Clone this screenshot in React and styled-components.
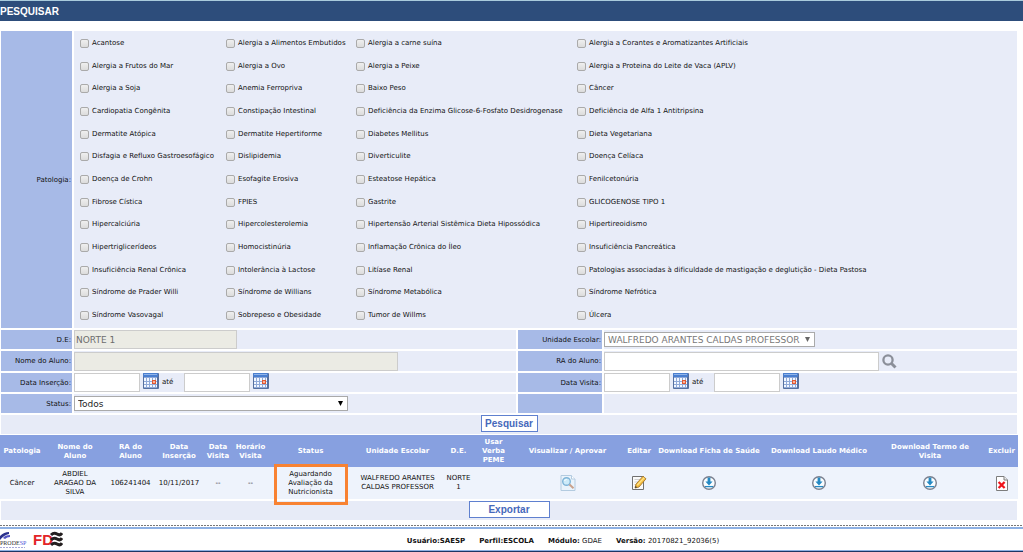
import React, { useState } from 'react';
import styled, { createGlobalStyle } from 'styled-components';

const patologias = [
    'Acantose', 'Alergia a Alimentos Embutidos', 'Alergia a carne suína', 'Alergia a Corantes e Aromatizantes Artificiais',
    'Alergia a Frutos do Mar', 'Alergia a Ovo', 'Alergia a Peixe', 'Alergia a Proteina do Leite de Vaca (APLV)',
    'Alergia a Soja', 'Anemia Ferropriva', 'Baixo Peso', 'Câncer',
    'Cardiopatia Congênita', 'Constipação Intestinal', 'Deficiência da Enzima Glicose-6-Fosfato Desidrogenase', 'Deficiência de Alfa 1 Antitripsina',
    'Dermatite Atópica', 'Dermatite Hepertiforme', 'Diabetes Mellitus', 'Dieta Vegetariana',
    'Disfagia e Refluxo Gastroesofágico', 'Dislipidemia', 'Diverticulite', 'Doença Celíaca',
    'Doença de Crohn', 'Esofagite Erosiva', 'Esteatose Hepática', 'Fenilcetonúria',
    'Fibrose Cística', 'FPIES', 'Gastrite', 'GLICOGENOSE TIPO 1',
    'Hipercalciúria', 'Hipercolesterolemia', 'Hipertensão Arterial Sistêmica Dieta Hipossódica', 'Hipertireoidismo',
    'Hipertriglicerídeos', 'Homocistinúria', 'Inflamação Crônica do Íleo', 'Insuficiência Pancreática',
    'Insuficiência Renal Crônica', 'Intolerância à Lactose', 'Litíase Renal', 'Patologias associadas à dificuldade de mastigação e deglutição - Dieta Pastosa',
    'Síndrome de Prader Willi', 'Síndrome de Willians', 'Síndrome Metabólica', 'Síndrome Nefrótica',
    'Síndrome Vasovagal', 'Sobrepeso e Obesidade', 'Tumor de Willms', 'Úlcera',
];

const columns = [
    { title: 'Patologia', width: 44 },
    { title: 'Nome do Aluno', width: 62, pad: 8 },
    { title: 'RA do Aluno', width: 49 },
    { title: 'Data Inserção', width: 48 },
    { title: 'Data Visita', width: 30 },
    { title: 'Horário Visita', width: 35 },
    { title: 'Status', width: 85 },
    { title: 'Unidade Escolar', width: 89 },
    { title: 'D.E.', width: 33 },
    { title: 'Usar Verba PEME', width: 37 },
    { title: 'Visualizar / Aprovar', width: 111 },
    { title: 'Editar', width: 32 },
    { title: 'Download Ficha de Saúde', width: 108 },
    { title: 'Download Laudo Médico', width: 112 },
    { title: 'Download Termo de Visita', width: 110, pad: 8 },
    { title: 'Excluir', width: 33 },
];

const CalendarIcon = () => (
    <svg width="16" height="16" viewBox="0 0 16 16">
        <rect x="0" y="0" width="16" height="16" rx="1" fill="#56709f" />
        <rect x="0" y="0" width="15" height="4" rx="1" fill="#4a7fd0" />
        <rect x="1" y="1" width="13" height="1" fill="#8fb4ea" />
        <rect x="1" y="4" width="13" height="11" fill="#8fa9d8" />
        {[5, 9, 12].map(y => [1, 4, 7, 10, 13].map(x => (
            <rect key={`${x}-${y}`} x={x} y={y} width={x === 13 ? 1 : 2} height={y === 5 ? 3 : 2} fill="#f3f7fe" />
        )))}
        <rect x="9" y="7" width="4" height="4" fill="#e0562f" />
        <rect x="10" y="8" width="2" height="2" fill="#f9b59c" />
    </svg>
)

const SearchIcon = () => (
    <svg width="15" height="15" viewBox="0 0 15 15" fill="none" stroke="#8b8f99">
        <circle cx="6" cy="6" r="4.6" strokeWidth="2.3" />
        <path d="M9.5 9.5L13.5 13.5" strokeWidth="3" />
    </svg>
)

const ViewIcon = () => (
    <svg width="16" height="16" viewBox="0 0 16 16">
        <path d="M1 .5H11.5L15 4V15.5H1Z" fill="#eaf3fb" stroke="#b3cbe0" />
        <path d="M11.5 .5V4H15" fill="#fff" stroke="#b3cbe0" />
        <circle cx="6.5" cy="6.5" r="3.8" fill="#cdebf9" stroke="#7fb4d8" strokeWidth="1.4" />
        <path d="M4.5 6Q5 4.5 6.7 4.4" fill="none" stroke="#fff" />
        <path d="M9.5 9.5L13.5 13.3" stroke="#c9a18c" strokeWidth="2" />
    </svg>
)

const EditIcon = () => (
    <svg width="16" height="16" viewBox="0 0 16 16">
        <path d="M1.5 1.5H12.5V14.5H1.5Z" fill="#fafafa" stroke="#707070" />
        <path d="M3.5 4.5H9M3.5 7H7M3.5 9.5H5" stroke="#d0d0d0" />
        <path d="M4 13L5 9.2L12 1.2L15 3.8L8 12Z" fill="#f6be3f" stroke="#a5762a" strokeWidth=".9" />
        <path d="M6.3 10.2L13.3 2.6" stroke="#ffe68f" strokeWidth="1.2" />
        <path d="M4 13L4.6 10.9L6.2 12.3Z" fill="#333" />
    </svg>
)

const DownloadIcon = () => (
    <svg width="16" height="16" viewBox="0 0 16 16">
        <circle cx="8" cy="8" r="6.3" fill="#fafdff" stroke="#7b8190" strokeWidth="1.4" />
        <path d="M6.6 2.5H9.4V6.5H11.6L8 10.4L4.4 6.5H6.6Z" fill="#2589c3" />
        <path d="M4 11.6H12" stroke="#2589c3" strokeWidth="1.3" />
    </svg>
)

const DeleteIcon = () => (
    <svg width="14" height="17" viewBox="0 0 14 17">
        <path d="M1.5 1.5H9L12.5 5V15.5H1.5Z" fill="#fff" stroke="#7c7c7c" />
        <path d="M9 1.5V5H12.5" fill="#eee" stroke="#7c7c7c" />
        <path d="M3.6 7L9.6 13M9.6 7L3.6 13" stroke="#f0141c" strokeWidth="2.3" />
    </svg>
)

const ProdespLogo = () => (
    <svg width="28" height="18" viewBox="0 0 28 18">
        <path d="M0 5Q4 1 9 1V3Q4 4 0 9Z" fill="#2b318c" />
        <path d="M3 7Q5 4 10 4V6Q7 6 5 8Z" fill="#5456c3" />
        <text x="0" y="14" fontSize="6" fontFamily="Liberation Serif, serif" fill="#333">PRODE<tspan fill="#4f55d8">SP</tspan></text>
        <path d="M0 16.5H25" stroke="#a6a9da" strokeDasharray="2 1" />
    </svg>
)

const FdeLogo = () => (
    <svg width="30" height="18" viewBox="0 0 30 18">
        <text x="0" y="14" fontSize="15" fontWeight="bold" fontFamily="Liberation Sans, sans-serif" fill="#e32428">FD</text>
        <path d="M18 4Q21 1 24 3T29 2M18 9Q21 6 24 8T29 7M18 14Q21 11 24 13T29 12" fill="none" stroke="#231f20" strokeWidth="3" />
    </svg>
)

const DateRange = ({ id, label }) => (
    <>
        <TextInput id={id} $width={66} />
        <IconButton aria-label={`${label} inicial`}><CalendarIcon /></IconButton>
        <Until htmlFor={`${id}Fim`}>até</Until>
        <TextInput id={`${id}Fim`} $width={66} />
        <IconButton aria-label={`${label} final`}><CalendarIcon /></IconButton>
    </>
)

const Select = ({ id, width, disabled, children }) => (
    <SelectWrap $width={width}>
        <SelectBox id={id} disabled={disabled}>{children}</SelectBox>
        <Arrow viewBox="0 0 5 5" $disabled={disabled}><path d="M0 0H5L2.5 5Z" /></Arrow>
    </SelectWrap>
)

const App = () => {

    const [marcadas, setMarcadas] = useState([]);

    const onCheck = (nome) => {
        setMarcadas(marcadas.includes(nome) ? marcadas.filter(m => m !== nome) : [...marcadas, nome]);
    }

    return (
        <>
            <GlobalStyle />
            <TitleBar>PESQUISAR</TitleBar>

            <Form onSubmit={e => e.preventDefault()}>
                <LabelCell as="div" id="patologia">Patologia:</LabelCell>
                <CheckGrid role="group" aria-labelledby="patologia">
                    {patologias.map(nome => (
                        <CheckLabel key={nome}>
                            <Check type="checkbox" checked={marcadas.includes(nome)} onChange={() => onCheck(nome)} />
                            {nome}
                        </CheckLabel>
                    ))}
                </CheckGrid>

                <LabelCell htmlFor="de">D.E:</LabelCell>
                <FieldCell><TextInput id="de" $width={163} defaultValue="NORTE 1" disabled /></FieldCell>
                <LabelCell htmlFor="unidade">Unidade Escolar:</LabelCell>
                <FieldCell>
                    <Select id="unidade" width={211} disabled>
                        <option>WALFREDO ARANTES CALDAS PROFESSOR</option>
                    </Select>
                </FieldCell>

                <LabelCell htmlFor="aluno">Nome do Aluno:</LabelCell>
                <FieldCell><TextInput id="aluno" $width={324} disabled /></FieldCell>
                <LabelCell htmlFor="ra">RA do Aluno:</LabelCell>
                <FieldCell>
                    <TextInput id="ra" $width={275} />
                    <IconButton aria-label="Buscar aluno"><SearchIcon /></IconButton>
                </FieldCell>

                <LabelCell htmlFor="insercao">Data Inserção:</LabelCell>
                <FieldCell $top><DateRange id="insercao" label="Data Inserção" /></FieldCell>
                <LabelCell htmlFor="visita">Data Visita:</LabelCell>
                <FieldCell $top><DateRange id="visita" label="Data Visita" /></FieldCell>

                <LabelCell htmlFor="status">Status:</LabelCell>
                <FieldCell>
                    <Select id="status" width={274}><option>Todos</option></Select>
                </FieldCell>
                <LabelCell as="div" />
                <FieldCell />
            </Form>

            <ActionRow>
                <ActionButton $width={57}>Pesquisar</ActionButton>
            </ActionRow>

            <Results>
                <colgroup>
                    {columns.map(c => <Column key={c.title} $width={c.width} />)}
                </colgroup>
                <thead>
                    <tr>{columns.map(c => <HeadCell key={c.title} $pad={c.pad}>{c.title}</HeadCell>)}</tr>
                </thead>
                <tbody>
                    <tr>
                        <Cell>Câncer</Cell>
                        <Cell $pad={8}>ABDIEL ARAGAO DA SILVA</Cell>
                        <Cell>106241404</Cell>
                        <Cell>10/11/2017</Cell>
                        <Cell>--</Cell>
                        <Cell>--</Cell>
                        <StatusCell $pad={18}>Aguardando Avaliação da Nutricionista<Highlight /></StatusCell>
                        <Cell>WALFREDO ARANTES CALDAS PROFESSOR</Cell>
                        <Cell>NORTE 1</Cell>
                        <Cell />
                        <Cell><IconButton aria-label="Visualizar"><ViewIcon /></IconButton></Cell>
                        <Cell><IconButton aria-label="Editar"><EditIcon /></IconButton></Cell>
                        <Cell><IconButton aria-label="Download Ficha de Saúde"><DownloadIcon /></IconButton></Cell>
                        <Cell><IconButton aria-label="Download Laudo Médico"><DownloadIcon /></IconButton></Cell>
                        <Cell><IconButton aria-label="Download Termo de Visita"><DownloadIcon /></IconButton></Cell>
                        <Cell><IconButton aria-label="Excluir"><DeleteIcon /></IconButton></Cell>
                    </tr>
                </tbody>
            </Results>

            <ActionRow>
                <ActionButton $width={81}>Exportar</ActionButton>
            </ActionRow>

            <Dotted />
            <Footer>
                <Logos>
                    <ProdespLogo />
                    <FdeLogo />
                </Logos>
                <Info>
                    <span><b>Usuário:SAESP</b></span>
                    <span><b>Perfil:ESCOLA</b></span>
                    <span><b>Módulo:</b> GDAE</span>
                    <span><b>Versão:</b> 20170821_92036(5)</span>
                </Info>
            </Footer>
            <BottomBar />
        </>
    )
}


const GlobalStyle = createGlobalStyle`
    *{ box-sizing: border-box; }
    body{
        margin: 0; background: #fff; color: #111;
        font-family: Verdana, 'DejaVu Sans', sans-serif;
        font-size: 7px; line-height: 9px;
        font-variant-ligatures: none;
    }
    input, select, button{ margin: 0; font-family: inherit; }
    svg{ display: block; flex: none; }
`
const TitleBar = styled.h1`
    margin: 0 0 10px; height: 21px;
    border-top: 1px solid #a9cbdc; background: #2d4d7b;
    color: #fff; font: bold 10px/21px 'Liberation Sans', Arial, sans-serif;
`
const Form = styled.form`
    display: grid;
    grid-template-columns: 71px 442fr 84px 413fr;
    grid-template-rows: 297px 19px 20px 19px 19px;
    gap: 2px; margin: 0 6px 2px 1px;
`
const LabelCell = styled.label`
    display: flex; align-items: center; justify-content: flex-end;
    padding: 1px 1px 0 0; background: #a7bae7; white-space: nowrap;
`
const FieldCell = styled.div`
    display: flex; align-items: ${props => props.$top ? 'flex-start' : 'center'};
    background: #e8ecf8;
`
const CheckGrid = styled.div`
    grid-column: 2 / -1;
    display: grid; grid-template-columns: 146px 130px 221px 1fr; grid-auto-rows: 1fr;
    padding: 1px 0 1px 6px; background: #e8ecf8;
`
const CheckLabel = styled.label`
    display: flex; align-items: center; gap: 3px;
    white-space: nowrap;
`
const Check = styled.input`
    appearance: none; flex: none;
    width: 9px; height: 9px;
    border: 1px solid #aaa; border-radius: 2px;
    background: linear-gradient(#efefef, #dcdcdc);
    &:checked{ background: #5b7fd6; }
`
const TextInput = styled.input`
    width: ${props => props.$width}px; height: 19px; padding: 0 1px;
    border: 1px solid #ccc; background: #fff; color: #222;
    font-size: 9px;
    &:disabled{ background: #ebebe4; color: #6d6d6d; }
`
const IconButton = styled.button`
    display: inline-flex; vertical-align: middle;
    padding: 0 3px; border: 0; background: none; cursor: pointer;
`
const Until = styled.label`
    width: 22px; line-height: 19px;
`
const SelectWrap = styled.span`
    position: relative; display: flex;
    width: ${props => props.$width}px;
`
const SelectBox = styled.select`
    appearance: none; width: 100%; height: 15px; padding: 0 3px;
    border: 1px solid #aaa; border-radius: 0; background: #fff; color: #222;
    font-size: 9px;
    &:disabled{ color: #777; opacity: 1; }
`
const Arrow = styled.svg`
    position: absolute; right: 5px; top: 5px;
    width: 5px; height: 5px; pointer-events: none;
    fill: ${props => props.$disabled ? '#666' : '#000'};
`
const ActionRow = styled.div`
    display: flex; justify-content: center; align-items: flex-start;
    height: 19px; margin: 0 6px 1px 1px; background: #e7ebf7;
`
const ActionButton = styled.button`
    width: ${props => props.$width}px; height: 17px; padding: 0;
    border: 1px solid #5f80cf; background: #fff; color: #4668bb;
    font: bold 10px/15px 'Liberation Sans', Arial, sans-serif;
    cursor: pointer;
`
const Results = styled.table`
    width: calc(100% - 5px); margin-bottom: 2px;
    table-layout: fixed; border-collapse: collapse;
    text-align: center;
`
const Column = styled.col`
    width: ${props => props.$width}px;
`
const HeadCell = styled.th`
    height: 32px; padding: 1px ${props => props.$pad || 1}px 0;
    background: #87a0e0; color: #fff; font-weight: bold;
`
const Cell = styled.td`
    height: 32px; padding: 0 ${props => props.$pad || 2}px;
    background: #eef3fc;
`
const StatusCell = styled(Cell)`
    position: relative;
`
const Highlight = styled.span`
    position: absolute; top: -3px; right: 5px; bottom: -6px; left: 6px;
    border: 3px solid #f88232; pointer-events: none;
`
const Dotted = styled.div`
    height: 1px; margin-top: 5px;
    background: repeating-linear-gradient(90deg, #777 0 2px, #fff 2px 3px);
`
const Footer = styled.footer`
    display: flex; align-items: center;
    height: 24px; margin-top: 1px; border: solid #8db0e3; border-width: 2px 0 1px;
`
const Logos = styled.div`
    display: flex; align-items: center; gap: 5px;
    width: 103px;
`
const Info = styled.div`
    flex: 1; display: flex; justify-content: center; gap: 14px;
    padding-top: 3px;
`
const BottomBar = styled.div`
    height: 1px; background: #1c3564;
`

export default App;
